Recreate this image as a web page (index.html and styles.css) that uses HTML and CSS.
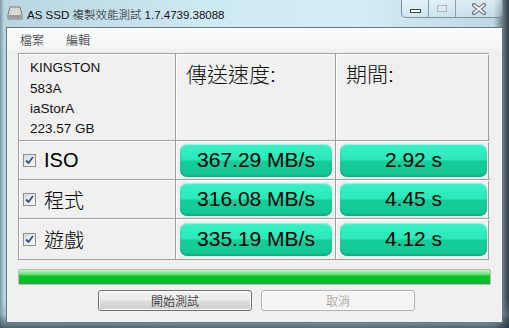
FILE: index.html
```html
<!DOCTYPE html>
<html lang="zh-Hant">
<head>
    <meta charset="UTF-8">
    <title>AS SSD</title>
    <link rel="stylesheet" href="styles.css">
</head>
<body>

    <!-- Pasek tytułu -->
    <div class="titlebar">
        <svg class="app-icon" width="16" height="14" viewBox="0 0 16 14">
            <path d="M3 1h10l2 8v4H1V9z" fill="#d8d8d8" stroke="#7a7a7a"/>
            <rect x="2" y="9" width="12" height="3" fill="#9a9a9a"/>
        </svg>
        <span class="title">AS SSD 複製效能測試 1.7.4739.38088</span>
        <div class="caption">
            <span class="cap-btn cap-min"><i></i></span>
            <span class="cap-btn cap-max"><i></i></span>
            <span class="cap-btn cap-close">
                <svg width="16" height="12" viewBox="0 0 16 12">
                    <path d="M3 2l10 8M13 2L3 10" stroke="#5a6470" stroke-width="4" stroke-linecap="round"/>
                    <path d="M3 2l10 8M13 2L3 10" stroke="#fff" stroke-width="2" stroke-linecap="round"/>
                </svg>
            </span>
        </div>
    </div>

    <div class="client">
        <div class="menubar">
            <span>檔案</span>
            <span>編輯</span>
        </div>

        <div class="panel">
            <div class="cell info">
                <div>KINGSTON</div>
                <div>583A</div>
                <div class="gap">iaStorA</div>
                <div>223.57 GB</div>
            </div>
            <div class="cell head">傳送速度:</div>
            <div class="cell head last">期間:</div>

            <div class="cell label"><span class="check"></span>ISO</div>
            <div class="cell"><div class="result">367.29 MB/s</div></div>
            <div class="cell last"><div class="result">2.92 s</div></div>

            <div class="cell label"><span class="check"></span>程式</div>
            <div class="cell"><div class="result">316.08 MB/s</div></div>
            <div class="cell last"><div class="result">4.45 s</div></div>

            <div class="cell label bottom"><span class="check"></span>遊戲</div>
            <div class="cell bottom"><div class="result">335.19 MB/s</div></div>
            <div class="cell last bottom"><div class="result">4.12 s</div></div>
        </div>

        <div class="progress"><div class="bar"></div></div>

        <div class="buttons">
            <button class="btn">開始測試</button>
            <button class="btn disabled">取消</button>
        </div>
    </div>

</body>
</html>
```

FILE: styles.css
```css
body {
    margin: 0;
    width: 509px;
    height: 328px;
    overflow: hidden;
    font-family: "Liberation Sans", "Noto Sans CJK TC", sans-serif;
    font-weight: 300;
    /* szklana ramka okna */
    background:
        linear-gradient(to top, rgba(40, 60, 70, 0.75) 0, rgba(120, 150, 160, 0.3) 14px, transparent 30px),
        linear-gradient(to right, #7c98a4 0, #b8d6e2 4px, #cde9f2 40%, #d4eef6 70%, #bcd8e2 97%, #2e3a44 100%);
}

.titlebar {
    height: 27px;
    display: flex;
    align-items: flex-start;
    position: relative;
}

.app-icon {
    margin: 6px 0 0 7px;
}

.title {
    margin: 6px 0 0 4px;
    font-size: 11.5px;
    color: #111;
}

/* przyciski okna */
.caption {
    margin-left: auto;
    margin-right: 6px;
    display: flex;
    height: 17px;
    border: 1px solid #7f8f9c;
    border-top: none;
    border-radius: 0 0 5px 5px;
    background: linear-gradient(to bottom, rgba(255, 255, 255, 0.5), rgba(210, 235, 245, 0.3));
}

.cap-btn {
    width: 26px;
    display: flex;
    align-items: center;
    justify-content: center;
    border-left: 1px solid #8c9ca8;
}

.cap-btn:first-child {
    border-left: none;
}

.cap-min i {
    width: 9px;
    height: 2px;
    margin-top: 4px;
    background: #fff;
    border: 1px solid #444;
}

.cap-max i {
    width: 8px;
    height: 5px;
    border: 1px solid #a9b6bf;
    box-shadow: inset 0 0 0 1px #e0eaef;
}

.cap-close {
    width: 46px;
}

.client {
    margin: 0 6px;
    height: 294px;
    border: 1px solid #6b7880;
    background: #f0f0f0;
}

.menubar {
    height: 22px;
    display: flex;
    align-items: center;
    padding-left: 13px;
    gap: 22px;
    font-size: 12px;
    color: #111;
    background: linear-gradient(to bottom, #fbfcfd, #f3f4f6);
}

.panel {
    margin: 3px 0 0 11px;
    width: 471px;
    display: grid;
    grid-template-columns: 157px 160px 154px;
    grid-template-rows: 87px 39px 39px 40px;
    border: 1px solid #a0a0a0;
    box-sizing: border-box;
}

.cell {
    border-right: 1px solid #a0a0a0;
    border-bottom: 1px solid #a0a0a0;
    box-shadow: inset 1px 1px 0 #fff;
    display: flex;
    align-items: center;
    padding: 0 3px 0 4px;
}

.cell.last {
    border-right: none;
}

.cell.bottom {
    border-bottom: none;
}

.info {
    display: block;
    padding: 3px 0 0 11px;
    font-size: 13.5px;
    line-height: 21px;
    color: #111;
}

.info .gap {
    line-height: 19px;
}

.head {
    align-items: flex-start;
    padding: 4px 0 0 10px;
    font-size: 21px;
    color: #111;
}

.label {
    padding-left: 4px;
    font-size: 20px;
    color: #000;
}

.check {
    width: 11px;
    height: 11px;
    margin-right: 8px;
    border: 1px solid #8e8f8f;
    background:
        url("data:image/svg+xml,%3Csvg xmlns='http://www.w3.org/2000/svg' width='11' height='11'%3E%3Cpath d='M2 5.5l2.5 2.5L9 2' fill='none' stroke='%23344e8c' stroke-width='1.8'/%3E%3C/svg%3E") center no-repeat,
        linear-gradient(135deg, #dcdcdc, #fafafa);
}

.result {
    flex: 1;
    height: 33px;
    border-radius: 7px;
    display: flex;
    align-items: center;
    justify-content: center;
    font-size: 21px;
    color: #000;
    background: linear-gradient(to bottom, #38f2c6 0%, #2ae8b8 48%, #14cd99 52%, #12c896 100%);
    box-shadow: inset 0 -2px 2px rgba(0, 150, 110, 0.45), inset 0 1px 1px rgba(255, 255, 255, 0.5);
}

.progress {
    margin: 9px 0 0 11px;
    width: 473px;
    height: 16px;
    border: 1px solid #b8b8b8;
    box-sizing: border-box;
    border-radius: 2px;
    background: #e6e6e6;
}

.bar {
    height: 100%;
    background: linear-gradient(to bottom, #c6f5c6 0%, #6fe07a 30%, #06c42a 45%, #04c226 80%, #26a83a 100%);
}

.buttons {
    margin: 5px 0 0 91px;
    display: flex;
    gap: 9px;
}

.btn {
    width: 154px;
    height: 21px;
    padding: 0;
    font-family: "Liberation Sans", "Noto Sans CJK TC", sans-serif;
    font-weight: 300;
    font-size: 12px;
    color: #000;
    border: 1px solid #707070;
    border-radius: 3px;
    background: linear-gradient(to bottom, #f2f2f2 0%, #ebebeb 48%, #dddddd 52%, #cfcfcf 100%);
    box-shadow: inset 0 0 0 1px #fcfcfc;
}

.btn.disabled {
    color: #8d8d8d;
    border-color: #adb2b5;
    background: #f4f4f4;
}
```
